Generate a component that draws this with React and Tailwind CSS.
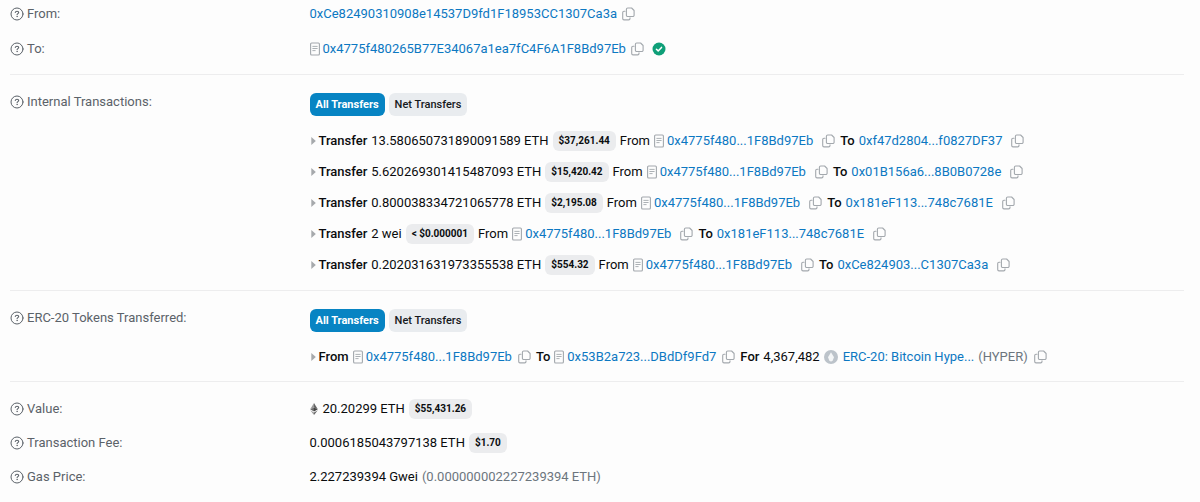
import React from 'react';

const transfers = [
  { amount: '13.580650731890091589 ETH', usd: '$37,261.44', from: '0x4775f480...1F8Bd97Eb', to: '0xf47d2804...f0827DF37' },
  { amount: '5.620269301415487093 ETH', usd: '$15,420.42', from: '0x4775f480...1F8Bd97Eb', to: '0x01B156a6...8B0B0728e' },
  { amount: '0.800038334721065778 ETH', usd: '$2,195.08', from: '0x4775f480...1F8Bd97Eb', to: '0x181eF113...748c7681E' },
  { amount: '2 wei', usd: '< $0.000001', from: '0x4775f480...1F8Bd97Eb', to: '0x181eF113...748c7681E' },
  { amount: '0.202031631973355538 ETH', usd: '$554.32', from: '0x4775f480...1F8Bd97Eb', to: '0xCe824903...C1307Ca3a' },
];

const HelpIcon = () => (
  <svg className="size-[14px] shrink-0" viewBox="0 0 14 14" fill="none" stroke="currentColor" strokeLinecap="round" strokeLinejoin="round" aria-hidden="true">
    <circle cx="7" cy="7" r="6" strokeWidth="1" />
    <path d="M5.3 5.500c.1-.7.7-1.200 1.700-1.200 1 0 1.700.5 1.700 1.300 0 1-1.600 1.100-1.600 2.100" strokeWidth="1.100" />
    <circle cx="7.050" cy="9.600" r=".3" strokeWidth=".7" />
  </svg>
);

const CopyIcon = () => (
  <svg className="h-[14px] w-[13px]" viewBox="0 0 13 14" fill="none" stroke="currentColor" strokeWidth="1.100" strokeLinejoin="round" strokeLinecap="round" aria-hidden="true">
    <path d="M5.700 1h3.900l2.500 2.500v4.700a1.300 1.300 0 0 1-1.300 1.300H5.700a1.300 1.300 0 0 1-1.300-1.300V2.300A1.300 1.300 0 0 1 5.700 1z" />
    <path d="M3 4.300H2A1.300 1.300 0 0 0 .7 5.600v6A1.300 1.300 0 0 0 2 12.900h4.700A1.300 1.300 0 0 0 8 11.600v-.7" />
  </svg>
);

const ContractIcon = () => (
  <svg className="mr-[3px] h-[14px] w-[10px] shrink-0 text-[#a3a8ad]" viewBox="0 0 10 14" fill="none" stroke="currentColor" strokeLinecap="round" aria-hidden="true">
    <rect x=".6" y="1" width="8.800" height="12" rx="1" strokeWidth="1.100" />
    <path d="M2.800 4.400h4.400M2.800 6.500h4.400M2.800 8.600h2.400" strokeWidth=".9" />
  </svg>
);

const VerifiedIcon = () => (
  <svg className="ml-[3px] size-[14px]" viewBox="0 0 14 14" role="img" aria-label="Verified">
    <circle cx="7" cy="7" r="6.500" fill="#0f9f78" />
    <path d="M4.400 7.200l1.800 1.700 3.300-3.500" fill="none" stroke="#fff" strokeWidth="1.500" strokeLinecap="round" strokeLinejoin="round" />
  </svg>
);

const TokenIcon = () => (
  <svg className="size-[14px]" viewBox="0 0 14 14" aria-hidden="true">
    <circle cx="7" cy="7" r="7" fill="#bcc3ca" />
    <path d="M7 2.300L10 7.200 8.800 10.200 7 11.700 5.200 10.200 4 7.200z" fill="#f4f6f7" />
  </svg>
);

const EthIcon = () => (
  <svg className="mr-[5px] h-[12px] w-[8px]" viewBox="0 0 8 12" aria-hidden="true">
    <path d="M4 0L.2 6.200 4 4.500z" fill="#9a9a9a" />
    <path d="M4 0l3.800 6.200L4 4.500z" fill="#666" />
    <path d="M.2 6.200L4 4.500v4z" fill="#6a6a6a" />
    <path d="M7.800 6.200L4 4.500v4z" fill="#444" />
    <path d="M.2 7.200L4 9.400V12z" fill="#9a9a9a" />
    <path d="M7.800 7.200L4 9.400V12z" fill="#666" />
  </svg>
);

const Caret = () => (
  <svg className="mr-[3px] ml-px h-[8px] w-[5px]" viewBox="0 0 5 8" aria-hidden="true">
    <path d="M.3 0L4.800 4 .3 8z" fill="#a6a9ac" />
  </svg>
);

const CopyButton = () => (
  <button type="button" aria-label="Copy" className="flex text-[#a3a8ad]">
    <CopyIcon />
  </button>
);

const Address = ({ children, contract }) => (
  <span className="flex items-center">
    {contract && <ContractIcon />}
    <a href="#" className="text-[#0c78c2]">{children}</a>
  </span>
);

const Badge = ({ children }) => (
  <span className="rounded-md bg-[#ebecee] px-[6px] text-[10px] leading-[20px] font-bold">{children}</span>
);

const TransferTabs = () => (
  <div className="mt-px mb-[15px] flex gap-[4px] text-[11px] leading-[23px] font-medium">
    <button type="button" className="rounded-md bg-[#0784c3] px-[6px] font-bold text-white">All Transfers</button>
    <button type="button" className="rounded-md bg-[#e9ecef] px-[6px] text-[#16191c]">Net Transfers</button>
  </div>
);

const Row = ({ label, children }) => (
  <div className="flex">
    <dt className="flex h-[20px] w-1/4 shrink-0 items-center gap-[3px] text-[#5b6269]">
      <HelpIcon />
      {label}
    </dt>
    <dd className="min-w-0 pl-[6px]">{children}</dd>
  </div>
);

const Line = ({ children }) => (
  <div className="flex min-h-[20px] flex-wrap items-center gap-x-[4px]">{children}</div>
);

const App = () => {
  return (
    <main className="min-h-screen bg-[#fdfdfd] pt-[4px] pr-[16px] pl-[10px] font-[Roboto,sans-serif] text-[13px] leading-[20px] text-[#0a0c0e]">
      <dl className="divide-y divide-[#ededee]">
        {/* Addresses */}
        <div className="flex flex-col gap-[15px] pb-[15px]">
          <Row label="From:">
            <div className="flex items-center gap-[5px]">
              <Address>0xCe82490310908e14537D9fd1F18953CC1307Ca3a</Address>
              <CopyButton />
            </div>
          </Row>
          <Row label="To:">
            <div className="flex items-center gap-[5px]">
              <Address contract>0x4775f480265B77E34067a1ea7fC4F6A1F8Bd97Eb</Address>
              <CopyButton />
              <VerifiedIcon />
            </div>
          </Row>
        </div>

        {/* Internal transactions */}
        <div className="pt-[17px] pb-[15px]">
          <Row label="Internal Transactions:">
            <TransferTabs />
            <div className="flex flex-col gap-[11px]">
              {transfers.map((item, index) => (
                <Line key={index}>
                  <span className="flex items-center font-medium"><Caret />Transfer</span>
                  <span>{item.amount}</span>
                  <Badge>{item.usd}</Badge>
                  <span>From</span>
                  <Address contract>{item.from}</Address>
                  <span className="flex items-center gap-[5px] pl-[5px] font-medium">
                    <CopyButton />
                    To
                  </span>
                  <Address>{item.to}</Address>
                  <span className="pl-[5px]"><CopyButton /></span>
                </Line>
              ))}
            </div>
          </Row>
        </div>

        {/* Token transfers */}
        <div className="pt-[17px] pb-[14px]">
          <Row label="ERC-20 Tokens Transferred:">
            <TransferTabs />
            <Line>
              <span className="flex items-center font-medium"><Caret />From</span>
              <Address contract>0x4775f480...1F8Bd97Eb</Address>
              <span className="flex items-center gap-[5px] pl-[2px] font-medium">
                <CopyButton />
                To
              </span>
              <Address contract>0x53B2a723...DBdDf9Fd7</Address>
              <span className="flex items-center gap-[5px] pl-[2px] font-medium">
                <CopyButton />
                For
              </span>
              <span>4,367,482</span>
              <span className="flex items-center gap-[5px]">
                <TokenIcon />
                <a href="#" className="text-[#0c78c2]">ERC-20: Bitcoin Hype...</a>
              </span>
              <span className="text-[#6c757d]">(HYPER)</span>
              <span className="pl-[2px]"><CopyButton /></span>
            </Line>
          </Row>
        </div>

        {/* Value and fees */}
        <div className="flex flex-col gap-[14px] pt-[17px] pb-[16px]">
          <Row label="Value:">
            <Line>
              <span className="flex items-center"><EthIcon />20.20299 ETH</span>
              <Badge>$55,431.26</Badge>
            </Line>
          </Row>
          <Row label="Transaction Fee:">
            <Line>
              <span>0.0006185043797138 ETH</span>
              <Badge>$1.70</Badge>
            </Line>
          </Row>
          <Row label="Gas Price:">
            <Line>
              <span>2.227239394 Gwei</span>
              <span className="text-[#6c757d]">(0.000000002227239394 ETH)</span>
            </Line>
          </Row>
        </div>
      </dl>
    </main>
  );
};

export default App;
